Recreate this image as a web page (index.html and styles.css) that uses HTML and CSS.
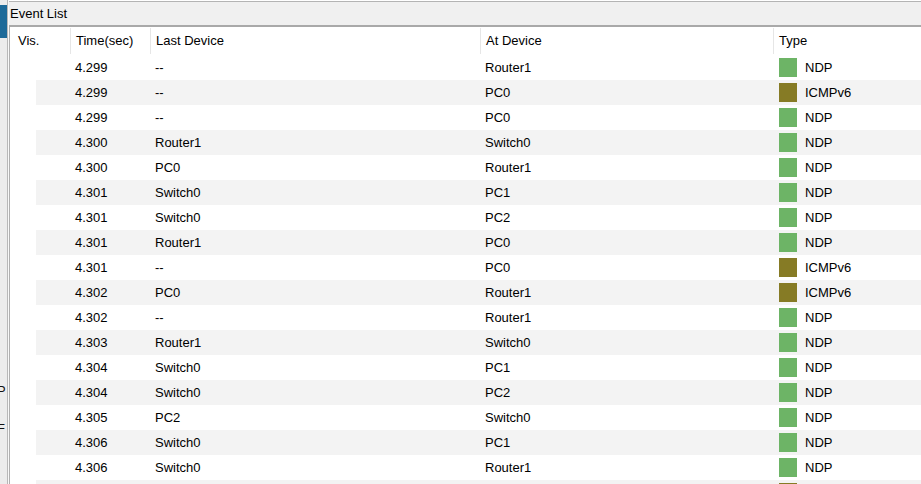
FILE: index.html
```html
<!DOCTYPE html>
<html>
<head>
<meta charset="utf-8">
<link rel="stylesheet" href="styles.css">
</head>
<body>
<div class="side">
  <div class="side-top"></div>
  <div class="side-blue"></div>
  <div class="side-letter side-p">P</div>
  <div class="side-letter side-f">F</div>
</div>
<div class="panel">
  <div class="titlebar">Event List</div>
  <div class="table">
    <div class="head">
      <div class="hcell hvis">Vis.</div>
      <div class="hcell">Time(sec)</div>
      <div class="hcell">Last Device</div>
      <div class="hcell">At Device</div>
      <div class="hcell">Type</div>
    </div>
    <div class="rows">
      <div class="row"><div></div><div class="c">4.299</div><div class="c">--</div><div class="c">Router1</div><div class="c t"><span class="sq ndp"></span>NDP</div></div>
      <div class="row"><div></div><div class="c">4.299</div><div class="c">--</div><div class="c">PC0</div><div class="c t"><span class="sq icmp"></span>ICMPv6</div></div>
      <div class="row"><div></div><div class="c">4.299</div><div class="c">--</div><div class="c">PC0</div><div class="c t"><span class="sq ndp"></span>NDP</div></div>
      <div class="row"><div></div><div class="c">4.300</div><div class="c">Router1</div><div class="c">Switch0</div><div class="c t"><span class="sq ndp"></span>NDP</div></div>
      <div class="row"><div></div><div class="c">4.300</div><div class="c">PC0</div><div class="c">Router1</div><div class="c t"><span class="sq ndp"></span>NDP</div></div>
      <div class="row"><div></div><div class="c">4.301</div><div class="c">Switch0</div><div class="c">PC1</div><div class="c t"><span class="sq ndp"></span>NDP</div></div>
      <div class="row"><div></div><div class="c">4.301</div><div class="c">Switch0</div><div class="c">PC2</div><div class="c t"><span class="sq ndp"></span>NDP</div></div>
      <div class="row"><div></div><div class="c">4.301</div><div class="c">Router1</div><div class="c">PC0</div><div class="c t"><span class="sq ndp"></span>NDP</div></div>
      <div class="row"><div></div><div class="c">4.301</div><div class="c">--</div><div class="c">PC0</div><div class="c t"><span class="sq icmp"></span>ICMPv6</div></div>
      <div class="row"><div></div><div class="c">4.302</div><div class="c">PC0</div><div class="c">Router1</div><div class="c t"><span class="sq icmp"></span>ICMPv6</div></div>
      <div class="row"><div></div><div class="c">4.302</div><div class="c">--</div><div class="c">Router1</div><div class="c t"><span class="sq ndp"></span>NDP</div></div>
      <div class="row"><div></div><div class="c">4.303</div><div class="c">Router1</div><div class="c">Switch0</div><div class="c t"><span class="sq ndp"></span>NDP</div></div>
      <div class="row"><div></div><div class="c">4.304</div><div class="c">Switch0</div><div class="c">PC1</div><div class="c t"><span class="sq ndp"></span>NDP</div></div>
      <div class="row"><div></div><div class="c">4.304</div><div class="c">Switch0</div><div class="c">PC2</div><div class="c t"><span class="sq ndp"></span>NDP</div></div>
      <div class="row"><div></div><div class="c">4.305</div><div class="c">PC2</div><div class="c">Switch0</div><div class="c t"><span class="sq ndp"></span>NDP</div></div>
      <div class="row"><div></div><div class="c">4.306</div><div class="c">Switch0</div><div class="c">PC1</div><div class="c t"><span class="sq ndp"></span>NDP</div></div>
      <div class="row"><div></div><div class="c">4.306</div><div class="c">Switch0</div><div class="c">Router1</div><div class="c t"><span class="sq ndp"></span>NDP</div></div>
      <div class="row"><div></div><div class="c"></div><div class="c"></div><div class="c"></div><div class="c t"><span class="sq icmp"></span></div></div>
    </div>
  </div>
</div>
</body>
</html>
```

FILE: styles.css
```css
html, body {
  margin: 0;
  padding: 0;
}
body {
  width: 921px;
  height: 484px;
  overflow: hidden;
  display: flex;
  background: #ffffff;
  font-family: "Liberation Sans", Arial, sans-serif;
  font-size: 13px;
  color: #000000;
}
.side {
  width: 7px;
  flex: none;
  background: #ececec;
  border-right: 1px solid #b8b8b8;
  overflow: hidden;
  display: flex;
  flex-direction: column;
}
.side-top {
  height: 5px;
}
.side-blue {
  height: 33px;
  background: #1d6a99;
}
.side-letter {
  font-size: 13px;
  line-height: 14px;
  margin-left: -3px;
  color: #111;
}
.side-p {
  margin-top: 346px;
}
.side-f {
  margin-top: 24px;
}
.panel {
  flex: 1;
  display: flex;
  flex-direction: column;
  border-left: 1px solid #f8f8f8;
  min-width: 0;
}
.titlebar {
  margin-top: 1px;
  height: 23px;
  border-top: 1px solid #b4b4b4;
  border-bottom: 2px solid #a9a9a9;
  background: #f0f0f0;
  padding-left: 1px;
  line-height: 23px;
  font-size: 13px;
  flex: none;
}
.table {
  flex: 1;
  border-left: 1px solid #b0b0b0;
  background: #ffffff;
  overflow: hidden;
}
.head {
  height: 28px;
  display: grid;
  grid-template-columns: 60px 80px 330px 293px 1fr;
  align-items: center;
}
.hcell {
  height: 26px;
  line-height: 26px;
  padding-left: 5px;
  border-left: 1px solid #e6e6e6;
  white-space: nowrap;
}
.hcell.hvis {
  border-left: none;
  padding-left: 8px;
}
.rows {
  padding-left: 26px;
}
.row {
  height: 25px;
  display: grid;
  grid-template-columns: 34px 80px 330px 293px 1fr;
  align-items: center;
  line-height: 25px;
}
.row:nth-child(even) {
  background: #f3f3f3;
}
.c {
  padding-left: 5px;
  white-space: nowrap;
}
.c.t {
  padding-left: 6px;
  display: flex;
  align-items: center;
}
.sq {
  width: 18px;
  height: 19px;
  margin-right: 8px;
  flex: none;
}
.ndp {
  background: #6db466;
}
.icmp {
  background: #867b25;
}
```
